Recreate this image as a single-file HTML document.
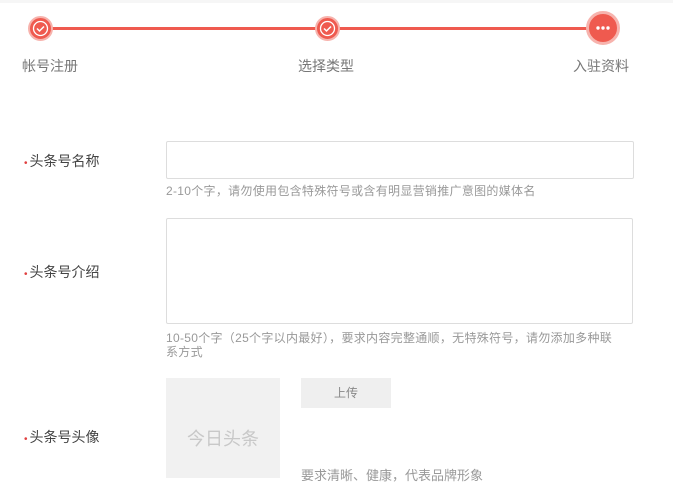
<!DOCTYPE html>
<html><head><meta charset="utf-8"><style>
*{margin:0;padding:0;box-sizing:border-box}
body{width:673px;height:474px;overflow:hidden;background:#fff;position:relative;font-family:"Liberation Sans","Noto Sans CJK SC",sans-serif;color:#555}
.a{position:absolute}
.line{left:40px;top:27px;width:563px;height:3px;background:#ef5a4f}
.c{border-radius:50%;background:#ef5a4f;border:2px solid #f7b3ad}
.lbl{font-size:14px;color:#777;top:56px}
.fl{font-size:14px;color:#444;left:24px}
.fl b{color:#e04040;font-weight:normal;font-size:10px;margin-right:2px}
.box{border:1px solid #ddd;border-radius:2px;background:#fff}
.hint{font-size:12px;color:#999;left:166px;line-height:14px;letter-spacing:0.3px}
</style></head><body>
<div class="a" style="left:0;top:0;width:673px;height:3px;background:#f6f6f6"></div>
<div class="a line"></div>
<div class="a c" style="left:28px;top:16px;width:25px;height:25px"><svg width="21" height="21" viewBox="0 0 21 21"><circle cx="10.5" cy="10.5" r="7" fill="none" stroke="#fff" stroke-width="1.3"/><path d="M7 10.5l2.5 2.5 4.5-4.5" fill="none" stroke="#fff" stroke-width="1.5"/></svg></div>
<div class="a c" style="left:315px;top:16px;width:25px;height:25px"><svg width="21" height="21" viewBox="0 0 21 21"><circle cx="10.5" cy="10.5" r="7" fill="none" stroke="#fff" stroke-width="1.3"/><path d="M7 10.5l2.5 2.5 4.5-4.5" fill="none" stroke="#fff" stroke-width="1.5"/></svg></div>
<div class="a c" style="left:586px;top:11px;width:34px;height:34px;border-width:3px"><svg width="28" height="28" viewBox="0 0 28 28"><circle cx="9" cy="14" r="1.7" fill="#fff"/><circle cx="14" cy="14" r="1.7" fill="#fff"/><circle cx="19" cy="14" r="1.7" fill="#fff"/></svg></div>
<div class="a lbl" style="left:22px">帐号注册</div>
<div class="a lbl" style="left:298px">选择类型</div>
<div class="a lbl" style="left:573px">入驻资料</div>

<div class="a fl" style="top:151px"><b>•</b>头条号名称</div>
<div class="a box" style="left:166px;top:141px;width:468px;height:38px"></div>
<div class="a hint" style="top:184px">2-10个字，请勿使用包含特殊符号或含有明显营销推广意图的媒体名</div>

<div class="a fl" style="top:262px"><b>•</b>头条号介绍</div>
<div class="a box" style="left:166px;top:218px;width:467px;height:106px"></div>
<div class="a hint" style="top:331px;width:470px">10-50个字（25个字以内最好），要求内容完整通顺，无特殊符号，请勿添加多种联<br>系方式</div>

<div class="a fl" style="top:427px"><b>•</b>头条号头像</div>
<div class="a" style="left:166px;top:378px;width:114px;height:100px;background:#f1f1f1;color:#c8c8c8;font-size:18px;text-align:center;padding-top:47px">今日头条</div>
<div class="a" style="left:301px;top:378px;width:90px;height:30px;background:#efefef;color:#888;font-size:12px;text-align:center;line-height:30px">上传</div>
<div class="a" style="left:301px;top:465px;font-size:13px;color:#999">要求清晰、健康，代表品牌形象</div>
</body></html>
